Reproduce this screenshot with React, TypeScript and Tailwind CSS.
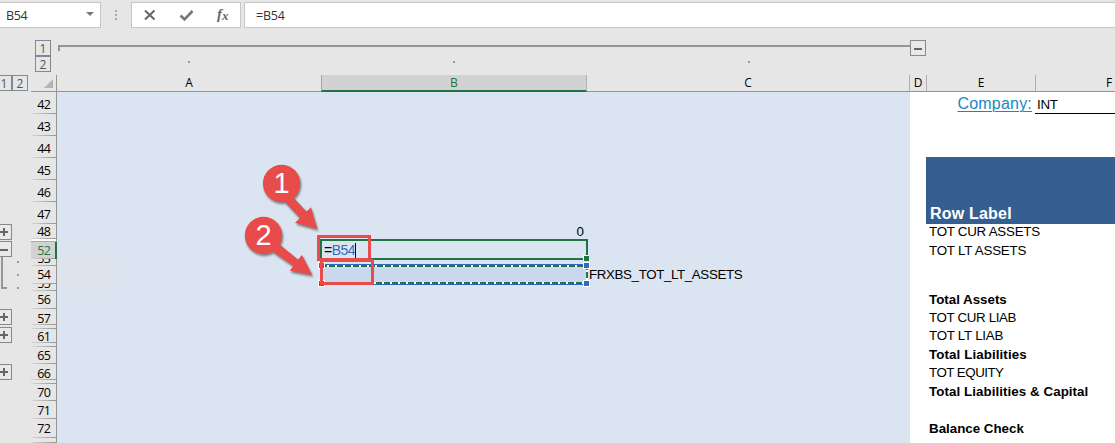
import React from "react";

type Row = { n: string; h: string; label?: string; style?: string; c?: string; b?: string; head?: string };

const rows: Row[] = [
  { n: "42", h: "h-[22px]", head: "pt-[3px]" },
  { n: "43", h: "h-[22px]", head: "pt-[3px]" },
  { n: "44", h: "h-[22px]", head: "pt-[3px]" },
  { n: "45", h: "h-[22px]", head: "pt-[3px]" },
  { n: "46", h: "h-[22px]", head: "pt-[3px]" },
  { n: "47", h: "h-[22px]", head: "pt-[3px]" },
  { n: "48", h: "h-[15px]", head: "pt-[1px]", label: "TOT CUR ASSETS", style: "tracking-[-0.25px] pt-[1px]", b: "0" },
  { n: "", h: "h-[3px]" },
  { n: "52", h: "h-[17px]", label: "TOT LT ASSETS", style: "tracking-[-0.2px]" },
  { n: "53", h: "h-[7px]" },
  { n: "54", h: "h-[18px]", c: "FRXBS_TOT_LT_ASSETS" },
  { n: "55", h: "h-[7px]" },
  { n: "56", h: "h-[18px]", label: "Total Assets", style: "font-bold pb-[1px]" },
  { n: "57", h: "h-[16px]", head: "pt-[3px]", label: "TOT CUR LIAB", style: "tracking-[-0.35px] pt-[2px]" },
  { n: "", h: "h-[4px]" },
  { n: "61", h: "h-[14px]", head: "pt-[1px]", label: "TOT LT LIAB", style: "tracking-[-0.25px]" },
  { n: "", h: "h-[4px]" },
  { n: "65", h: "h-[17px]", label: "Total Liabilities", style: "font-bold tracking-[0.1px] pb-[2px]" },
  { n: "66", h: "h-[16px]", head: "pt-[3px]", label: "TOT EQUITY", style: "tracking-[-0.5px] pt-[2px]" },
  { n: "", h: "h-[4px]" },
  { n: "70", h: "h-[17px]", label: "Total Liabilities & Capital", style: "font-bold tracking-[0.07px] pb-[2px]" },
  { n: "71", h: "h-[18px]", head: "pt-[2px]" },
  { n: "72", h: "h-[19px]", label: "Balance Check", style: "font-bold" },
  { n: "", h: "h-[5px]" },
];

const ui = "font-['Open_Sans',sans-serif]";

function Toggle({ minus, className = "" }: { minus?: boolean; className?: string }) {
  return (
    <div className={`flex h-4 w-4 shrink-0 items-center justify-center border border-[#848890] bg-[#e9e9e9] ${className}`}>
      <svg width="8" height="8" viewBox="0 0 8 8" shapeRendering="crispEdges">
        <path d={minus ? "M0 4h8v2H0z" : "M0 3h8v2H0zM3 0h2v8H3z"} fill="#666" />
      </svg>
    </div>
  );
}

function Level({ n }: { n: string }) {
  return (
    <div className={`flex h-4 w-4 shrink-0 items-center justify-center border border-[#848890] pt-px text-[12px] leading-none text-[#555] ${ui}`}>
      {n}
    </div>
  );
}

function FormulaBar() {
  return (
    <div className={`flex h-[30px] shrink-0 items-start pt-[2px] text-[12.5px] text-[#333] ${ui}`}>
      <div className="flex h-[26px] w-[101px] items-center justify-between border border-l-0 border-[#c6c6c6] bg-white pl-[6px] pr-[6px]">
        <span className="pt-[3px] tracking-[-0.4px]">B54</span>
        <svg width="8" height="4" viewBox="0 0 8 4" className="-mt-[2px]"><path d="M0 0h8L4 4z" fill="#777" /></svg>
      </div>
      <svg width="30" height="26" viewBox="0 0 30 26" shapeRendering="crispEdges">
        <path d="M14 8h2v2h-2zM14 12h2v2h-2zM14 16h2v2h-2z" fill="#aaa" />
      </svg>
      <div className="h-[26px] w-[110px] border border-[#c6c6c6] bg-white">
        <svg width="108" height="24" viewBox="0 0 108 24" fill="none">
          <path d="M13 7.500l9.500 9M22.500 7.500l-9.500 9" stroke="#666" strokeWidth="2" />
          <path d="M48.500 12.500l4 4 8-8.500" stroke="#777" strokeWidth="2.600" />
          <text x="85" y="16" fontFamily="Liberation Serif, serif" fontStyle="italic" fontWeight="700" fontSize="15" fill="#666">f</text>
          <text x="90" y="17" fontFamily="Liberation Serif, serif" fontStyle="italic" fontWeight="700" fontSize="13" fill="#666">x</text>
        </svg>
      </div>
      <div className="ml-[3px] flex h-[26px] flex-1 items-center border border-r-0 border-[#c6c6c6] bg-white pl-[11px]">
        <span className="pt-[3px] tracking-[-0.2px]">=B54</span>
      </div>
    </div>
  );
}

function ColumnOutline() {
  return (
    <div className="flex h-[45px] shrink-0 pt-[10px]">
      <div className="w-[57px] pl-[35px]">
        <Level n="1" />
        <Level n="2" />
      </div>
      <div className="w-[853px] pl-[1px] pt-[5px]">
        <div className="h-[6px] border-l-2 border-t-2 border-[#969696]" />
        <div className="-ml-[1px] grid grid-cols-[264px_266px_323px] justify-items-center pt-[10px]">
          <i className="h-[2px] w-[2px] bg-[#999]" />
          <i className="h-[2px] w-[2px] bg-[#999]" />
          <i className="h-[2px] w-[2px] bg-[#999]" />
        </div>
      </div>
      <Toggle minus />
    </div>
  );
}

function ColumnHeads() {
  const sep = "border-r border-r-[#b0b0b0]";
  const cell = "flex shrink-0 items-center justify-center border-b border-b-[#969696]";
  return (
    <div className={`flex h-[17px] shrink-0 text-[12px] leading-none text-black ${ui}`}>
      <div className="-ml-1 flex w-[35px] shrink-0"><Level n="1" /><Level n="2" /></div>
      <div className="flex w-[26px] shrink-0 items-start justify-end border-b border-r border-[#969696] pr-[3px] pt-[4px]">
        <svg width="9" height="9" viewBox="0 0 9 9"><path d="M9 0v9H0z" fill="#b4b4b4" /></svg>
      </div>
      <div className={`${cell} w-[264px]`}>A</div>
      <div className="flex w-[266px] shrink-0 items-center justify-center border-b-2 border-l border-r border-b-[#217346] border-l-[#a6a6a6] border-r-[#b0b0b0] bg-[#d2d2d2] text-[#217346]">B</div>
      <div className={`${cell} ${sep} w-[323px]`}>C</div>
      <div className={`${cell} ${sep} w-[17px]`}>D</div>
      <div className={`${cell} ${sep} w-[109px]`}>E</div>
      <div className={`${cell} w-[146px]`}>F</div>
    </div>
  );
}

function RowOutline() {
  return (
    <div className="w-[31px] shrink-0 pt-[132px]">
      <Toggle className="-ml-1" />
      <Toggle minus className="-ml-1 mt-[1px]" />
      <div className="flex h-[32px]">
        <div className="ml-[1px] w-[6px] border-b-2 border-l-2 border-[#969696]" />
        <div className="ml-[10px] flex flex-col gap-[11px] pt-[4px]">
          <i className="h-[2px] w-[2px] bg-[#999]" />
          <i className="h-[2px] w-[2px] bg-[#999]" />
          <i className="h-[2px] w-[2px] bg-[#999]" />
        </div>
      </div>
      <Toggle className="-ml-1 mt-[20px]" />
      <Toggle className="-ml-1 mt-[2px]" />
      <Toggle className="-ml-1 mt-[21px]" />
    </div>
  );
}

function RowHead({ r }: { r: Row }) {
  const active = r.n === "52";
  const clipped = r.n === "53" || r.n === "55";
  return (
    <div className={`relative flex shrink-0 justify-end overflow-hidden text-[12.5px] leading-[14px] tracking-[-0.8px] ${r.h} ${r.head ?? ""} ${clipped ? "items-end" : "items-center"} ${active ? "border-r-2 border-[#217346] bg-[#d2d2d2] pr-[5px] text-[#217346]" : "border-r border-[#969696] pr-[6px] text-black"}`}>
      <span>{r.n}</span>
      <i className="absolute bottom-0 left-0 h-px w-full bg-linear-to-r from-[#d8d8d8] to-[#969696]" />
    </div>
  );
}

function Report() {
  return (
    <div className="flex min-w-0 flex-1 flex-col overflow-hidden bg-white">
      <div className="flex h-[22px] shrink-0">
        <div className="w-[125px] shrink-0 pr-[3px] text-right text-[16px] leading-[23px] tracking-[0.2px] text-[#1a87c4] underline decoration-1 underline-offset-[2px]">Company:</div>
        <div className="flex-1 border-b border-black pl-[2px] leading-[25px] tracking-[-0.3px]">INT</div>
      </div>
      <div className="ml-4 mt-[43px] flex h-[67px] shrink-0 items-end bg-[#365f91] pl-[4px] text-[16px] font-bold leading-[20px] tracking-[0.2px] text-white">Row Label</div>
      {rows.slice(6).map((r, i) => (
        <div key={i} className={`flex shrink-0 items-center whitespace-nowrap pl-[19px] ${r.h} ${r.style ?? ""}`}>{r.label}</div>
      ))}
    </div>
  );
}

function Selection() {
  const handle = "absolute h-[7px] w-[7px] border border-white bg-[#316ac5]";
  return (
    <>
      <div className="absolute left-0 top-[160px] h-[37px] w-[58px] bg-[#dde4ee]" />
      <div className="absolute left-[263px] top-[147px] h-[21px] w-[268px] border-2 border-[#217346]" />
      <div className="absolute left-[526px] top-[163px] h-[6px] w-[6px] border-l border-t border-white bg-[#217346]" />
      <div className="absolute left-[264px] top-[172px] h-[21px] w-[266px] border-y border-[#316ac5] bg-[#c9d8ec]" />
      <svg className="absolute left-[264px] top-[173px]" width="267" height="19" fill="none">
        <path d="M0 1h266v17H0z" stroke="#fff" strokeWidth="2" />
        <path d="M0 1h266v17H0z" stroke="#217346" strokeWidth="2" strokeDasharray="6 2" />
      </svg>
      <div className={`${handle} left-[261px] top-[170px]`} />
      <div className={`${handle} left-[261px] top-[188px]`} />
      <div className={`${handle} left-[526px] top-[170px]`} />
      <div className={`${handle} left-[526px] top-[188px]`} />
      <div className="absolute left-[267px] top-[150px] flex h-[16px] items-center text-[14px] leading-none tracking-[-0.5px] text-black">
        =<span className="text-[#316ac5]">B54</span><i className="h-[15px] w-px bg-black" />
      </div>
      <div className="absolute left-[260px] top-[143px] h-[26px] w-[54px] border-[3px] border-[#e84c4a]" />
      <div className="absolute left-[263px] top-[167px] h-[26px] w-[54px] border-[3px] border-[#e84c4a]" />
      <svg className="absolute left-[173px] top-[58px] drop-shadow-[1px_2px_1px_rgba(0,0,0,0.45)]" width="100" height="140" fill="#e84c4a">
        <path d="M54 51L61 45 76.500 61.500 81 57.300 87.300 79 65 72.700 70 68z" />
        <path d="M43 102L49 94 68 109.500 72 105 82.300 125 59.700 120.700 63.500 116z" />
        <circle cx="51.600" cy="33.500" r="18.700" />
        <circle cx="33.500" cy="85.500" r="18.700" />
      </svg>
      <div className="absolute left-[206px] top-[73px] w-[37px] text-center text-[29px] leading-[37px] text-white">1</div>
      <div className="absolute left-[188px] top-[125px] w-[37px] text-center text-[29px] leading-[37px] text-white">2</div>
    </>
  );
}

export default function App() {
  return (
    <div className="flex h-[443px] w-[1115px] flex-col overflow-hidden bg-[#e6e6e6] font-['Liberation_Sans',Arial,sans-serif] text-[13.33px] text-black">
      <FormulaBar />
      <ColumnOutline />
      <ColumnHeads />
      <div className="flex min-h-0 flex-1 leading-none">
        <RowOutline />
        <div className={`flex w-[26px] shrink-0 flex-col ${ui}`}>
          {rows.map((r, i) => i === 7 ? <div key={i} className="h-[3px] shrink-0 border-b border-r border-b-[#aaa] border-r-[#969696] bg-white" /> : <RowHead key={i} r={r} />)}
        </div>
        <div className="relative w-[853px] shrink-0 bg-[#dbe5f1]">
          {rows.map((r, i) => (
            <div key={i} className={`grid grid-cols-[264px_266px_323px] items-center ${r.h}`}>
              <span />
              <span className="relative z-10 pr-[3px] pt-px text-right">{r.b}</span>
              <span className="relative z-10 pl-[2px] tracking-[-0.37px]">{r.c}</span>
            </div>
          ))}
          <Selection />
        </div>
        <Report />
      </div>
    </div>
  );
}
